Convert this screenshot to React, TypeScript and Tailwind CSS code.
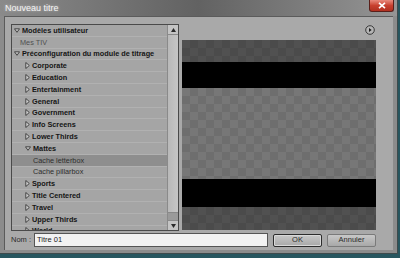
import React from "react";

type Row = { label: string; level: number; kind: "open" | "closed" | "leaf"; bold?: boolean; selected?: boolean };

const rows: Row[] = [
  { label: "Modèles utilisateur", level: 0, kind: "open", bold: true },
  { label: "Mes TIV", level: 0, kind: "leaf" },
  { label: "Préconfiguration du module de titrage", level: 0, kind: "open", bold: true },
  { label: "Corporate", level: 1, kind: "closed", bold: true },
  { label: "Education", level: 1, kind: "closed", bold: true },
  { label: "Entertainment", level: 1, kind: "closed", bold: true },
  { label: "General", level: 1, kind: "closed", bold: true },
  { label: "Government", level: 1, kind: "closed", bold: true },
  { label: "Info Screens", level: 1, kind: "closed", bold: true },
  { label: "Lower Thirds", level: 1, kind: "closed", bold: true },
  { label: "Mattes", level: 1, kind: "open", bold: true },
  { label: "Cache letterbox", level: 2, kind: "leaf", selected: true },
  { label: "Cache pillarbox", level: 2, kind: "leaf" },
  { label: "Sports", level: 1, kind: "closed", bold: true },
  { label: "Title Centered", level: 1, kind: "closed", bold: true },
  { label: "Travel", level: 1, kind: "closed", bold: true },
  { label: "Upper Thirds", level: 1, kind: "closed", bold: true },
  { label: "World", level: 1, kind: "closed", bold: true },
];

function Arrow({ open }: { open: boolean }) {
  return open ? (
    <svg width="6" height="5" viewBox="0 0 6 5" className="shrink-0">
      <path d="M0.5 0.8 L5.5 0.8 L3 4.3 Z" fill="#c8c8c8" stroke="#2a2a2a" strokeWidth="0.8" />
    </svg>
  ) : (
    <svg width="5" height="7" viewBox="0 0 5 7" className="shrink-0">
      <path d="M0.8 0.5 L4.3 3.5 L0.8 6.5 Z" fill="#d0d0d0" stroke="#2a2a2a" strokeWidth="0.8" />
    </svg>
  );
}

export default function App() {
  const indent = ["pl-[2px]", "pl-[13px]", "pl-[20px]"];
  return (
    <div className="w-[400px] h-[258px] bg-[#27565f] overflow-hidden font-['Liberation_Sans',sans-serif]">
      <div className="w-[398px] h-[254px] bg-[#8c8c8c] border-r border-b border-[#3e4a4c] flex flex-col">
        {/* title bar */}
        <div className="h-[16px] flex items-start justify-between bg-gradient-to-r from-[#8a8a8a] via-[#626262] to-[#959595]">
          <span className="pl-[5px] pt-[3px] text-[9px] leading-[10px] text-[#f4f4f4] [text-shadow:0_0_3px_#ffffff80]">
            Nouveau titre
          </span>
          <div className="mr-[3px] w-[25px] h-[12px] rounded-b-[3px] border border-t-0 border-[#5a1f1a] bg-gradient-to-b from-[#e8897c] via-[#c8402f] to-[#b03020] flex items-center justify-center">
            <svg width="8" height="7" viewBox="0 0 8 7">
              <path d="M1 0.8 L7 6.2 M7 0.8 L1 6.2" stroke="#ffffff" strokeWidth="1.6" />
            </svg>
          </div>
        </div>

        {/* body */}
        <div className="mx-[4px] mb-[3px] flex-1 border-l border-t border-[#5b5b5b] bg-[#a9a9a9] pl-[6px] pr-[16px] pt-[7px] flex flex-col">
          <div className="flex gap-[3px] h-[207px]">
            {/* tree */}
            <div className="w-[168px] h-[207px] border border-[#4a4a4a] bg-[#a5a5a5] flex">
              <div className="flex-1 overflow-hidden">
                {rows.map((r) => (
                  <div
                    key={r.label}
                    className={`h-[11.8px] flex items-center gap-[2px] border-b border-[#b1b1b1] ${indent[r.level]} ${
                      r.selected ? "bg-[#8e8e8e]" : ""
                    }`}
                  >
                    {r.kind === "open" && <Arrow open />}
                    {r.kind === "closed" && <Arrow open={false} />}
                    <span
                      className={`whitespace-nowrap text-[7.3px] leading-[9px] ${
                        r.bold ? "font-bold text-[#151515]" : r.level === 2 ? "text-[#2e2e2e]" : "text-[#505050]"
                      } ${r.kind === "leaf" && r.level === 0 ? "pl-[6px]" : ""} ${r.level === 2 ? "pl-[1px]" : ""}`}
                    >
                      {r.label}
                    </span>
                  </div>
                ))}
              </div>
              {/* scrollbar */}
              <div className="w-[11px] border-l border-[#8a8a8a] bg-[#9a9a9a] flex flex-col">
                <div className="h-[10px] bg-[#c4c4c4] border-b border-[#8a8a8a] flex items-center justify-center">
                  <svg width="5" height="4" viewBox="0 0 5 4">
                    <path d="M2.5 0 L5 4 L0 4 Z" fill="#2a2a2a" />
                  </svg>
                </div>
                <div className="h-[178px] bg-gradient-to-r from-[#b9b9b9] to-[#c6c6c6] border-b border-[#888]" />
                <div className="flex-1" />
                <div className="h-[10px] bg-[#c4c4c4] border-t border-[#8a8a8a] flex items-center justify-center">
                  <svg width="5" height="4" viewBox="0 0 5 4">
                    <path d="M0 0 L5 0 L2.5 4 Z" fill="#2a2a2a" />
                  </svg>
                </div>
              </div>
            </div>

            {/* preview column */}
            <div className="w-[194px] flex flex-col">
              <div className="h-[16px] flex justify-end items-start pr-[1px]">
                <svg width="10" height="10" viewBox="0 0 10 10" className="mt-[1px]">
                  <circle cx="5" cy="5" r="4.3" fill="#b5b5b5" stroke="#2e2e2e" strokeWidth="0.9" />
                  <path d="M4 3 L6.6 5 L4 7 Z" fill="#1e1e1e" />
                </svg>
              </div>
              <div className="h-[190px] flex flex-col">
                <div className="h-[22px] bg-[#4c4c4c] bg-[image:conic-gradient(#4b4b4b_25%,#515151_0_50%,#4b4b4b_0_75%,#515151_0)] bg-[length:16px_16px]" />
                <div className="h-[26px] bg-black" />
                <div className="h-[91px] bg-[#727272] bg-[image:conic-gradient(#6e6e6e_25%,#777777_0_50%,#6e6e6e_0_75%,#777777_0)] bg-[length:16px_16px]" />
                <div className="h-[28px] bg-black" />
                <div className="flex-1 bg-[#4c4c4c] bg-[image:conic-gradient(#4b4b4b_25%,#515151_0_50%,#4b4b4b_0_75%,#515151_0)] bg-[length:16px_16px]" />
              </div>
            </div>
          </div>

          {/* bottom row */}
          <div className="mt-[2px] h-[14px] flex items-center">
            <span className="w-[23px] text-[7.5px] text-[#2a2a2a] whitespace-nowrap">Nom :</span>
            <div className="w-[234px] h-[14px] border border-[#555] bg-[#f2f2f2] flex items-center pl-[2px]">
              <span className="text-[7.5px] text-[#222]">Titre 01</span>
            </div>
            <button className="ml-[5px] w-[49px] h-[13px] rounded-[2px] border border-[#2c2c2c] bg-gradient-to-b from-[#c8c8c8] to-[#a8a8a8] text-[7.5px] text-[#2a2a2a] flex items-center justify-center shadow-[inset_0_0_0_1px_#d8d8d8]">
              OK
            </button>
            <button className="ml-[5px] w-[49px] h-[13px] rounded-[2px] border border-[#7a7a7a] bg-gradient-to-b from-[#c8c8c8] to-[#a8a8a8] text-[7.5px] text-[#2a2a2a] flex items-center justify-center">
              Annuler
            </button>
          </div>
        </div>
      </div>
    </div>
  );
}
